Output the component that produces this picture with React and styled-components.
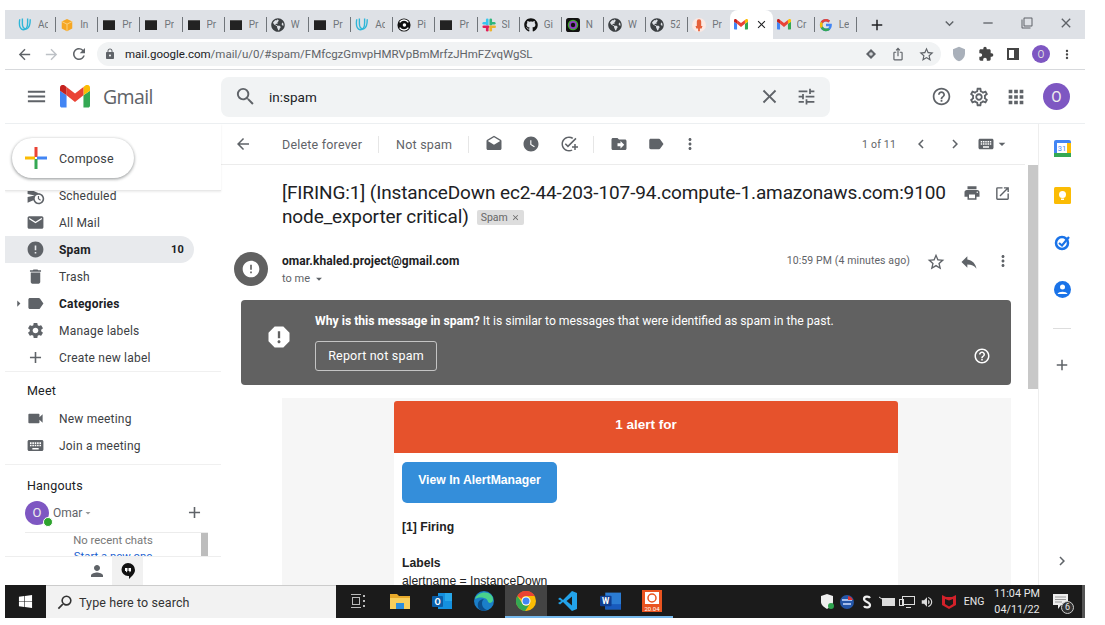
import React from "react";
import styled, { createGlobalStyle } from "styled-components";
import { FaGithub, FaGlobeAmericas, FaWindows } from "react-icons/fa";
import {
  MdAdd, MdAddTask, MdApps, MdArrowBack, MdArrowDropDown, MdArrowForward, MdArrowRight,
  MdChevronLeft, MdChevronRight, MdClose, MdDelete, MdDrafts, MdDriveFileMove, MdError,
  MdExtension, MdHelpOutline, MdIosShare, MdKeyboard, MdLabel, MdLock, MdMail, MdMenu,
  MdMoreVert, MdOpenInNew, MdOutlineSettings, MdPerson, MdPrint, MdRefresh, MdReply, MdReport,
  MdSearch, MdSettings, MdStarBorder, MdTune, MdVideocam, MdWatchLater, MdScheduleSend, MdVolumeUp,
  MdRemove, MdFilterNone, MdExpandMore, MdShield,
} from "react-icons/md";

const Global = createGlobalStyle`
  html, body { margin: 0; padding: 0; background: #fff; }
  * { box-sizing: border-box; }
  body { font-family: Roboto, "Liberation Sans", Arial, sans-serif; color: #202124; }
`;

const Page = styled.div`
  width: 1105px;
  height: 625px;
  padding: 10px 20px 7px 5px;
  overflow: hidden;
  display: flex;
  flex-direction: column;
`;

/* chrome */
const TabStrip = styled.div`
  height: 29px;
  background: #dee1e6;
  display: flex;
  align-items: center;
  padding-left: 9px;
  flex: none;
`;
const Tab = styled.div`
  width: 42.15px;
  height: ${(p) => (p.$active ? "29px" : "15px")};
  flex: none;
  display: flex;
  align-items: center;
  gap: 6px;
  padding-left: 4px;
  overflow: hidden;
  font-size: 10px;
  color: #70757a;
  white-space: nowrap;
  background: ${(p) => (p.$active ? "#fff" : "transparent")};
  border-radius: ${(p) => (p.$active ? "8px 8px 0 0" : "0")};
  border-right: ${(p) => (p.$active || p.$beforeActive ? "0" : "1px solid #70757a")};
`;
const TabGlyph = styled.span`
  width: 14px;
  height: 14px;
  flex: none;
  display: flex;
  align-items: center;
  justify-content: center;
  font-size: ${(p) => p.$size || 14}px;
  color: ${(p) => p.$color || "#3c4043"};
`;
const TabText = styled.span`
  width: 10px;
  overflow: hidden;
`;
const TerminalGlyph = styled.span`
  width: 12px;
  height: 10px;
  background: #222;
  border-top: 1px solid #555;
`;
const WindowButtons = styled.div`
  display: flex;
  align-items: center;
  margin-left: 11px;
`;
const NewTab = styled.span`
  width: 62px;
  font-size: 18px;
  display: flex;
  color: #202124;
`;
const WinButton = styled.span`
  width: 39px;
  display: flex;
  justify-content: center;
  padding-bottom: 3px;
  font-size: ${(p) => p.$size || 16}px;
  color: #5f6368;
`;

const Toolbar = styled.div`
  height: 31px;
  flex: none;
  display: flex;
  align-items: center;
  border-bottom: 1px solid #d7d9dc;
  padding-left: 6px;
`;
const NavSlot = styled.span`
  width: ${(p) => p.$w || 27}px;
  flex: none;
  display: flex;
  align-items: center;
  justify-content: center;
  font-size: ${(p) => p.$size || 17}px;
  color: ${(p) => p.$color || "#5f6368"};
  margin-left: ${(p) => p.$ml || 0}px;
`;
const Omnibox = styled.div`
  width: 844px;
  height: 24px;
  margin-left: 5px;
  border-radius: 12px;
  background: #f1f3f4;
  display: flex;
  align-items: center;
  padding: 0 1px 0 6px;
  flex: none;
`;
const Url = styled.div`
  flex: 1;
  font-size: 11.5px;
  color: #5f6368;
  margin-left: 8px;
  b { font-weight: 400; color: #202124; }
`;
const ChromeAvatar = styled.span`
  width: 18px;
  height: 18px;
  border-radius: 50%;
  background: #7e57c2;
  color: #ddd;
  font-size: 10px;
  display: flex;
  align-items: center;
  justify-content: center;
`;
const PanelGlyph = styled.span`
  width: 12px;
  height: 12px;
  border: 2px solid #444;
  border-right-width: 5px;
`;

/* gmail header */
const Header = styled.div`
  height: 54px;
  flex: none;
  display: flex;
  align-items: center;
  border-bottom: 1px solid #eceff1;
`;
const Brand = styled.div`
  width: 216px;
  flex: none;
  display: flex;
  align-items: center;
  padding-left: 19px;
  gap: 12px;
`;
const HeaderSlot = styled.span`
  width: ${(p) => p.$w || 37}px;
  flex: none;
  display: flex;
  justify-content: center;
  font-size: ${(p) => p.$size || 23}px;
  color: #5f6368;
`;
const Wordmark = styled.span`
  font-size: 19.5px;
  color: #5f6368;
  margin-left: 1px;
  font-family: "Open Sans", Roboto, sans-serif;
  letter-spacing: -0.6px;
`;
const SearchBox = styled.div`
  width: 609px;
  height: 40px;
  flex: none;
  background: #f1f3f4;
  border-radius: 8px;
  display: flex;
  align-items: center;
  padding: 0 5px 0 12px;
`;
const SearchText = styled.span`
  flex: 1;
  font-size: 13.5px;
  margin-left: 12px;
  color: #202124;
`;
const AccountAvatar = styled.span`
  width: 27px;
  height: 27px;
  border-radius: 50%;
  background: #7e57c2;
  color: #eee;
  font-size: 15px;
  display: flex;
  align-items: center;
  justify-content: center;
  margin-left: 9px;
`;
const HeaderRight = styled.div`
  display: flex;
  align-items: center;
  margin-left: 93px;
`;

const Main = styled.div`
  height: 461px;
  flex: none;
  display: flex;
  overflow: hidden;
`;

/* sidebar */
const Sidebar = styled.div`
  width: 216px;
  flex: none;
  display: flex;
  flex-direction: column;
  height: 100%;
`;
const ComposeArea = styled.div`
  height: 67px;
  flex: none;
  padding: 14px 0 0 7px;
  border-bottom: 1px solid #e8e8e8;
  box-shadow: 0 1px 2px rgba(0, 0, 0, 0.08);
  position: relative;
  z-index: 1;
  background: #fff;
`;
const ComposeButton = styled.div`
  width: 122px;
  height: 40px;
  border-radius: 20px;
  background: #fff;
  box-shadow: 0 1px 3px rgba(60, 64, 67, 0.4), 0 1px 3px 1px rgba(60, 64, 67, 0.15);
  display: flex;
  align-items: center;
  gap: 12px;
  padding-left: 13px;
  font-size: 12.5px;
  letter-spacing: 0.2px;
  color: #3c4043;
`;
const LabelClip = styled.div`
  height: 181px;
  flex: none;
  overflow: hidden;
  border-bottom: 1px solid #f0f0f0;
`;
const LabelList = styled.div`
  margin-top: -9px;
`;
const NavRow = styled.div`
  position: relative;
  width: 189px;
  height: 27px;
  display: flex;
  align-items: center;
  padding: 0 10px 0 20px;
  gap: 14px;
  font-size: 12px;
  letter-spacing: 0.2px;
  color: ${(p) => (p.$bold ? "#202124" : "#3c4043")};
  font-weight: ${(p) => (p.$bold ? 700 : 400)};
  background: ${(p) => (p.$active ? "#e8eaed" : "transparent")};
  border-radius: ${(p) => (p.$active ? "0 14px 14px 0" : "0")};
`;
const NavIcon = styled.span`
  width: 20px;
  flex: none;
  display: flex;
  justify-content: center;
  font-size: 19px;
  color: #5f6368;
`;
const Count = styled.span`
  margin-left: auto;
  font-size: 11px;
`;
const Caret = styled.span`
  position: absolute;
  left: 6px;
  top: 6px;
  font-size: 15px;
  display: flex;
  color: #5f6368;
`;
const SectionHead = styled.div`
  height: ${(p) => p.$h}px;
  flex: none;
  padding-left: 22px;
  display: flex;
  align-items: flex-end;
  font-size: 12.5px;
  letter-spacing: 0.2px;
  color: #202124;
  padding-bottom: ${(p) => p.$pb}px;
`;
const MeetBlock = styled.div`
  height: 93px;
  flex: none;
  border-bottom: 1px solid #f0f0f0;
`;
const HangoutsBlock = styled.div`
  flex: 1;
  min-height: 0;
  overflow: hidden;
  border-bottom: 1px solid #eee;
  display: flex;
  flex-direction: column;
`;
const OmarRow = styled.div`
  height: 37px;
  flex: none;
  display: flex;
  align-items: center;
  padding: 0 0 2px 20px;
  font-size: 12px;
  color: #5f6368;
`;
const OmarAvatar = styled.span`
  position: relative;
  width: 24px;
  height: 24px;
  border-radius: 50%;
  background: #7e57c2;
  color: #eee;
  font-size: 13px;
  display: flex;
  align-items: center;
  justify-content: center;
  margin-right: 4px;
`;
const Presence = styled.span`
  position: absolute;
  right: -4px;
  bottom: -2px;
  width: 10px;
  height: 10px;
  background: #2ea32e;
  border: 1px solid #fff;
  border-radius: 50%;
`;
const ChatBox = styled.div`
  margin-left: 20px;
  width: 183px;
  flex: 1;
  min-height: 0;
  border-top: 1px solid #ececec;
  display: flex;
  overflow: hidden;
`;
const ChatText = styled.div`
  flex: 1;
  text-align: center;
  font-size: 11.3px;
  line-height: 16px;
  color: #777;
  span { display: block; color: #1a5fd0; }
`;
const ChatThumb = styled.div`
  width: 7px;
  flex: none;
  background: #bdbdbd;
`;
const HangoutTabs = styled.div`
  height: 28px;
  flex: none;
  display: flex;
  padding-left: 76px;
`;
const HangoutTab = styled.span`
  width: 31px;
  display: flex;
  align-items: center;
  justify-content: center;
  font-size: 18px;
  color: ${(p) => (p.$active ? "#111" : "#5f6368")};
  background: ${(p) => (p.$active ? "#f1f1f1" : "transparent")};
`;

/* message column */
const Center = styled.div`
  width: 817px;
  flex: none;
  display: flex;
  flex-direction: column;
`;
const ActionBar = styled.div`
  width: 804px;
  height: 41px;
  flex: none;
  display: flex;
  align-items: center;
  padding-left: 10px;
  border-bottom: 1px solid #ececec;
  font-size: 12.5px;
  letter-spacing: 0.2px;
  color: #5f6368;
`;
const ActionIcon = styled.span`
  width: 24px;
  flex: none;
  display: flex;
  justify-content: center;
  font-size: ${(p) => p.$size || 18}px;
  color: ${(p) => p.$color || "#5f6368"};
  margin-left: ${(p) => p.$ml || 0}px;
`;
const ActionText = styled.span`
  margin-left: ${(p) => p.$ml || 0}px;
  white-space: nowrap;
`;
const Divider = styled.span`
  width: 1px;
  height: 17px;
  background: #e6e6e6;
  flex: none;
  margin-left: ${(p) => p.$ml}px;
`;
const Pager = styled.div`
  margin-left: auto;
  display: flex;
  align-items: center;
  font-size: 10.5px;
  padding-right: 15px;
  svg.caret { margin-left: -4px; }
`;
const MailRow = styled.div`
  flex: 1;
  min-height: 0;
  display: flex;
`;
const MailPane = styled.div`
  width: 807px;
  flex: none;
  overflow: hidden;
`;
const ScrollTrack = styled.div`
  width: 10px;
  flex: none;
`;
const ScrollThumb = styled.div`
  height: 224px;
  background: #c8c8c8;
`;
const SubjectRow = styled.div`
  display: flex;
  padding: 16px 0 0 61px;
`;
const Subject = styled.h2`
  margin: 0;
  width: 678px;
  flex: none;
  font-size: 19px;
  line-height: 24px;
  font-weight: 400;
  color: #202124;
  letter-spacing: -0.12px;
  white-space: nowrap;
`;
const Badge = styled.span`
  display: inline-flex;
  align-items: center;
  gap: 3px;
  height: 15px;
  margin-left: 8px;
  padding: 0 4px;
  border-radius: 2px;
  background: #ddd;
  font-size: 10.5px;
  letter-spacing: 0;
  color: #666;
  vertical-align: 2px;
  line-height: 15px;
`;
const SubjectActions = styled.div`
  display: flex;
  height: 24px;
  align-items: center;
  gap: 6px;
`;
const SenderRow = styled.div`
  display: flex;
  margin: 23px 0 0 13px;
  padding-right: 13px;
`;
const SenderAvatar = styled.span`
  width: 34px;
  height: 34px;
  border-radius: 50%;
  background: #616161;
  color: #fff;
  font-size: 20px;
  display: flex;
  align-items: center;
  justify-content: center;
  flex: none;
  margin-right: 14px;
`;
const SenderInfo = styled.div`
  flex: 1;
  padding-top: 1px;
`;
const SenderName = styled.div`
  font-size: 12px;
  line-height: 16px;
  font-weight: 700;
  letter-spacing: 0.07px;
`;
const ToMe = styled.div`
  margin-top: 2px;
  font-size: 11px;
  line-height: 16px;
  color: #5f6368;
  display: flex;
  align-items: center;
  svg { font-size: 14px; margin-left: 2px; }
`;
const SenderMeta = styled.div`
  display: flex;
  align-items: flex-start;
  font-size: 10.5px;
  letter-spacing: 0.1px;
  color: #5f6368;
  line-height: 18px;
`;
const MetaIcon = styled.span`
  width: 24px;
  margin-left: ${(p) => p.$ml}px;
  display: flex;
  justify-content: center;
  font-size: ${(p) => p.$size || 20}px;
`;
const Banner = styled.div`
  position: relative;
  margin: 13px 0 0 20px;
  width: 770px;
  height: 85px;
  border-radius: 4px;
  background: #616161;
  color: #fff;
  display: flex;
  padding: 13px 0 0 24px;
`;
const BannerIcon = styled.span`
  width: 28px;
  height: 28px;
  margin: 10px 22px 0 0;
  flex: none;
  font-size: 30px;
  display: flex;
  align-items: center;
  justify-content: center;
`;
const BannerText = styled.div`
  font-size: 12.2px;
  line-height: 16px;
  b { font-weight: 700; }
`;
const OutlineButton = styled.div`
  margin-top: 12px;
  width: 122px;
  height: 30px;
  border: 1px solid #c4c4c4;
  border-radius: 3px;
  display: flex;
  align-items: center;
  justify-content: center;
  font-size: 12.5px;
  letter-spacing: 0.2px;
`;
const BannerHelp = styled.span`
  position: absolute;
  right: 20px;
  bottom: 20px;
  font-size: 18px;
  display: flex;
`;
const BodyWrap = styled.div`
  margin: 13px 0 0 61px;
  width: 729px;
  height: 200px;
  padding: 3px 0 0 112px;
  background: #f6f6f6;
`;
const AlertCard = styled.div`
  width: 504px;
  height: 197px;
  background: #fff;
  border-radius: 3px 3px 0 0;
  font-family: "Liberation Sans", Arial, sans-serif;
`;
const AlertHead = styled.div`
  height: 52px;
  background: #e6522c;
  color: #fff;
  border-radius: 3px 3px 0 0;
  display: flex;
  align-items: center;
  justify-content: center;
  padding-bottom: 5px;
  font-size: 13.5px;
  font-weight: 700;
`;
const AlertBody = styled.div`
  padding: 9px 0 0 8px;
  font-size: 12.2px;
  color: #222;
`;
const AlertLink = styled.div`
  width: 155px;
  height: 41px;
  border-radius: 5px;
  background: #348eda;
  color: #fff;
  font-weight: 700;
  display: flex;
  align-items: center;
  justify-content: center;
  padding-bottom: 5px;
`;
const AlertLine = styled.div`
  margin-top: ${(p) => p.$mt}px;
  line-height: 16px;
  font-weight: ${(p) => (p.$bold ? 700 : 400)};
`;

/* add-on rail */
const Rail = styled.div`
  width: 47px;
  flex: none;
  border-left: 1px solid #eee;
  display: flex;
  flex-direction: column;
  align-items: center;
  padding-top: 14px;
`;
const RailIcon = styled.span`
  width: 20px;
  height: 20px;
  margin-bottom: 27px;
  display: flex;
  align-items: center;
  justify-content: center;
`;
const RailRule = styled.span`
  width: 18px;
  height: 1px;
  background: #ddd;
  margin: 2px 0 27px;
`;
const RailPlus = styled.span`
  font-size: 18px;
  display: flex;
  color: #5f6368;
`;
const RailChevron = styled.span`
  margin-top: auto;
  margin-bottom: 15px;
  font-size: 18px;
  display: flex;
  color: #5f6368;
`;

/* windows taskbar */
const Taskbar = styled.div`
  height: 33px;
  flex: none;
  display: flex;
  align-items: stretch;
  background: #1b1b1b;
  color: #e8e8e8;
  border-right: 3px solid #555;
`;
const StartButton = styled.span`
  width: 41px;
  flex: none;
  display: flex;
  align-items: center;
  justify-content: center;
  font-size: 15px;
  color: #fff;
`;
const TaskSearch = styled.div`
  width: 290px;
  flex: none;
  background: #f2f2f2;
  border-top: 1px solid #ccc;
  display: flex;
  align-items: center;
  padding-left: 9px;
  gap: 5px;
  color: #333;
  font-size: 12.5px;
  letter-spacing: 0.1px;
`;
const TaskApp = styled.span`
  width: ${(p) => p.$w || 42}px;
  flex: none;
  display: flex;
  align-items: center;
  justify-content: center;
  background: ${(p) => (p.$active ? "#444" : "transparent")};
  border-bottom: 2px solid ${(p) => (p.$open ? "#76b9ed" : "transparent")};
  font-size: 17px;
`;
const Tray = styled.div`
  margin-left: auto;
  display: flex;
  align-items: center;
  padding-right: 5px;
`;
const TraySlot = styled.span`
  width: ${(p) => p.$w || 20}px;
  display: flex;
  align-items: center;
  justify-content: center;
  font-size: 14px;
`;
const TrayLang = styled.span`
  width: 26px;
  text-align: center;
  font-size: 10.5px;
`;
const Clock = styled.div`
  width: 52px;
  text-align: center;
  font-size: 10.8px;
  line-height: 16px;
  margin-left: 4px;
`;
const Notify = styled.span`
  position: relative;
  width: 34px;
  display: flex;
  justify-content: center;
`;
const NotifyBadge = styled.span`
  position: absolute;
  right: 3px;
  bottom: -4px;
  width: 13px;
  height: 13px;
  border-radius: 50%;
  background: #333;
  border: 1px solid #ccc;
  font-size: 9px;
  line-height: 11px;
  text-align: center;
`;

const GmailLogo = ({ w = 30 }) => (
  <svg width={w} height={w * 0.75} viewBox="0 0 32 24">
    <path d="M2 24h5V11L0 6v16c0 1 1 2 2 2z" fill="#4285f4" />
    <path d="M25 24h5c1 0 2-1 2-2V6l-7 5z" fill="#34a853" />
    <path d="M25 2v9l7-5V3c0-3-3-4-5-2.500z" fill="#fbbc04" />
    <path d="M7 11V2l9 7 9-7v9l-9 7z" fill="#ea4335" />
    <path d="M0 3v3l7 5V2L5 .5C3-1 0 0 0 3z" fill="#c5221f" />
  </svg>
);

const Udacity = () => (
  <svg width="15" height="15" viewBox="0 0 16 16" fill="none" stroke="#2fb6d8" strokeWidth="1.6">
    <path d="M2 2c-1 6 0 11 4 12 4 0 5-4 5-8V1" />
    <path d="M5 1v6c0 4 2 6 5 6 3-1 4-6 4-11" />
  </svg>
);
const OrangeBox = () => (
  <svg width="14" height="14" viewBox="0 0 16 16">
    <path d="M8 1l6 3v8l-6 3-6-3V4z" fill="#f5a623" />
    <path d="M8 7v8M2 4l6 3 6-3" stroke="#fcd68a" fill="none" />
  </svg>
);
const CircleCi = () => (
  <svg width="14" height="14" viewBox="0 0 16 16">
    <circle cx="8" cy="8" r="7.500" fill="#111" />
    <circle cx="8.500" cy="8" r="2" fill="#fff" />
    <path d="M3 5a6 6 0 0 1 10 0M3 11a6 6 0 0 0 10 0" stroke="#fff" strokeWidth="1.500" fill="none" />
  </svg>
);
const Slack = () => (
  <svg width="14" height="14" viewBox="0 0 16 16" strokeWidth="3" strokeLinecap="round">
    <path d="M6 2v5" stroke="#36c5f0" />
    <path d="M10 2v5" stroke="#2eb67d" />
    <path d="M2 10h5" stroke="#e01e5a" />
    <path d="M9.500 10h5" stroke="#ecb22e" />
    <path d="M2 6h3" stroke="#36c5f0" />
    <path d="M12 6h2" stroke="#2eb67d" />
    <path d="M6 12v2" stroke="#e01e5a" />
    <path d="M10 12v2" stroke="#ecb22e" />
  </svg>
);
const Nagios = () => (
  <svg width="14" height="14" viewBox="0 0 16 16">
    <rect width="16" height="16" rx="3" fill="#111" />
    <circle cx="8" cy="8" r="6" fill="#3fae2a" />
    <circle cx="8" cy="8" r="4.500" fill="#8e3fc4" />
    <circle cx="8" cy="8" r="2.500" fill="#111" />
  </svg>
);
const Mic = () => (
  <svg width="14" height="14" viewBox="0 0 16 16">
    <circle cx="8" cy="8" r="8" fill="#fbe9e4" />
    <path d="M5.500 4a2.500 2.500 0 0 1 5 0v5h-5zM4 9h8l-1 3H5zM7 12h2v3H7z" fill="#e5603a" />
  </svg>
);
const GoogleG = () => (
  <svg width="14" height="14" viewBox="0 0 48 48">
    <path d="M44 20H24v8h11.500C34 33 30 36 24 36c-7 0-12-5-12-12s5-12 12-12c3 0 6 1 8 3l6-6C34 5 29 3 24 3 12 3 3 12 3 24s9 21 21 21c11 0 20-8 20-21 0-1 0-3 0-4z" fill="#4285f4" />
    <path d="M6 13l7 5c2-4 6-6 11-6 3 0 6 1 8 3l6-6C34 5 29 3 24 3 16 3 9 7 6 13z" fill="#ea4335" />
    <path d="M24 45c5 0 10-2 14-5l-7-5c-2 1-4 1-7 1-5 0-10-3-11-8l-7 5c3 7 10 12 18 12z" fill="#34a853" />
    <path d="M6 13c-2 3-3 7-3 11s1 8 3 11l7-7c-1-3-1-5 0-10z" fill="#fbbc04" />
  </svg>
);
const LensEye = () => (
  <svg width="12" height="12" viewBox="0 0 12 12">
    <path d="M6 1l5 5-5 5-5-5z" fill="#5f6368" />
    <circle cx="6" cy="6" r="1.800" fill="#d5d7da" />
  </svg>
);
const ComposePlus = () => (
  <svg width="22" height="22" viewBox="0 0 22 22">
    <rect x="9.500" y="0" width="3" height="10" fill="#ea4335" />
    <rect x="12" y="9.500" width="10" height="3" fill="#4285f4" />
    <rect x="9.500" y="12" width="3" height="10" fill="#34a853" />
    <rect x="0" y="9.500" width="10" height="3" fill="#fbbc04" />
  </svg>
);
const Calendar = () => (
  <svg width="17" height="17" viewBox="0 0 17 17">
    <rect width="17" height="17" rx="2" fill="#4285f4" />
    <rect x="13" y="3" width="4" height="11" fill="#fbbc04" />
    <rect y="13" width="17" height="4" fill="#34a853" />
    <rect x="3" y="3" width="10" height="10" fill="#fff" />
    <text x="8" y="11" fontSize="7.500" textAnchor="middle" fill="#4285f4">31</text>
  </svg>
);
const Keep = () => (
  <svg width="17" height="17" viewBox="0 0 17 17">
    <rect width="17" height="17" rx="1.500" fill="#fbbc04" />
    <circle cx="8.500" cy="7.500" r="3.500" fill="#fff" />
    <rect x="7" y="11.500" width="3" height="1.500" fill="#fff" />
  </svg>
);
const Tasks = () => (
  <svg width="17" height="17" viewBox="0 0 17 17" fill="none">
    <circle cx="8" cy="9" r="6" stroke="#1a73e8" strokeWidth="2.500" />
    <path d="M5 9l3 2.500L15 3" stroke="#1a73e8" strokeWidth="2.200" />
  </svg>
);
const Contact = () => (
  <svg width="17" height="17" viewBox="0 0 17 17">
    <circle cx="8.500" cy="8.500" r="8.500" fill="#1a73e8" />
    <circle cx="8.500" cy="6" r="2.500" fill="#fff" />
    <path d="M3.500 13c1-3 9-3 10 0z" fill="#fff" />
  </svg>
);
const HangoutBubble = () => (
  <svg width="14" height="16" viewBox="0 0 14 16">
    <path d="M7 0a7 7 0 0 1 7 7c0 4-4 7-6 9v-3H7A6.500 6.500 0 0 1 7 0z" fill="#111" />
    <path d="M4 5h2.500v3L5 9.500V8H4zM7.500 5H10v3L8.500 9.500V8h-1z" fill="#fff" />
  </svg>
);
const TaskView = () => (
  <svg width="16" height="14" viewBox="0 0 16 14" fill="none" stroke="#bbb">
    <path d="M1 .5h10M1 13.500h10" />
    <rect x="2.500" y="3.500" width="7" height="7" />
    <path d="M14 1v2M14 6v2M14 11v2" strokeWidth="2" />
  </svg>
);
const Explorer = () => (
  <svg width="20" height="17" viewBox="0 0 20 17">
    <path d="M0 2h7l2 2h11v4H0z" fill="#e8a92a" />
    <rect y="6" width="20" height="11" fill="#f9cf5b" />
    <rect x="6" y="11" width="8" height="6" fill="#2d8fdd" />
  </svg>
);
const Outlook = () => (
  <svg width="20" height="18" viewBox="0 0 20 18">
    <rect x="6" y="1" width="14" height="16" fill="#1490df" />
    <rect x="13" y="1" width="7" height="8" fill="#28a8ea" />
    <rect y="4" width="11" height="11" rx="1" fill="#0a5ea8" />
    <text x="5.500" y="13" fontSize="9" textAnchor="middle" fill="#fff" fontWeight="700">O</text>
  </svg>
);
const Edge = () => (
  <svg width="20" height="20" viewBox="0 0 20 20">
    <circle cx="10" cy="10" r="10" fill="#1b7fc9" />
    <path d="M1 8C3 1 14-1 18 5c2 3 1 7-2 7-3 0-1-4-6-5C6 6 3 7 1 8z" fill="#49d18c" />
    <path d="M10 20c-5 0-7-4-6-8 1-3 4-4 6-4-3 2-3 9 3 11z" fill="#0c4f8c" />
  </svg>
);
const Chrome = () => (
  <svg width="20" height="20" viewBox="0 0 20 20">
    <circle cx="10" cy="10" r="10" fill="#fbbc04" />
    <path d="M1.300 5A10 10 0 0 1 18.700 5H10a5 5 0 0 0-4.500 3z" fill="#ea4335" />
    <path d="M1.300 5A10 10 0 0 0 9 20l4.500-6.500A5 5 0 0 1 5.500 11z" fill="#34a853" />
    <circle cx="10" cy="10" r="4.500" fill="#fff" />
    <circle cx="10" cy="10" r="3.500" fill="#4285f4" />
  </svg>
);
const VsCode = () => (
  <svg width="20" height="20" viewBox="0 0 20 20">
    <path d="M14 0l5 2v16l-5 2L5 11l-3 2.500L0 12l3.500-2L0 8l2-1.500L5 9z" fill="#23a3ea" />
    <path d="M14 5.500L8.500 10l5.500 4.500z" fill="#1b1b1b" />
  </svg>
);
const Word = () => (
  <svg width="21" height="20" viewBox="0 0 20 18">
    <rect x="5" y="1" width="15" height="16" fill="#2b7cd3" />
    <rect x="5" y="12" width="15" height="5" fill="#185abd" />
    <rect y="4" width="11" height="10" rx="1" fill="#103f91" />
    <text x="5.500" y="12" fontSize="8" textAnchor="middle" fill="#fff" fontWeight="700">W</text>
  </svg>
);
const Ubuntu = () => (
  <svg width="20" height="22" viewBox="0 0 20 22">
    <rect width="20" height="22" fill="#e95420" />
    <rect x="3" y="2" width="14" height="12" fill="#fff" />
    <circle cx="10" cy="8" r="4" fill="none" stroke="#e95420" strokeWidth="1.500" />
    <text x="10" y="20.500" fontSize="6" textAnchor="middle" fill="#fff">20.04</text>
  </svg>
);
const TrayShield = () => (
  <svg width="14" height="15" viewBox="0 0 14 15">
    <path d="M7 0l6 2v6c0 3-3 5-6 7-3-2-6-4-6-7V2z" fill="#eee" />
    <circle cx="11" cy="12" r="3" fill="#2ea44f" />
  </svg>
);
const TrayBall = () => (
  <svg width="14" height="14" viewBox="0 0 14 14">
    <circle cx="7" cy="7" r="7" fill="#2456a8" />
    <path d="M2 5h10M3 9h8" stroke="#cfe0ff" strokeWidth="1.500" />
    <path d="M8 1a7 7 0 0 1 5 4H8z" fill="#d33" />
  </svg>
);
const TrayS = () => (
  <svg width="10" height="14" viewBox="0 0 10 14" fill="none" stroke="#eee" strokeWidth="2.200">
    <path d="M8 3C7 1 2 1 2 4s6 3 6 6-5 3-6 1" />
  </svg>
);
const TrayBattery = () => (
  <svg width="16" height="11" viewBox="0 0 16 11">
    <rect x="3" y="2" width="13" height="8" fill="#ddd" />
    <path d="M0 1l3 2" stroke="#ddd" />
  </svg>
);
const TrayNet = () => (
  <svg width="16" height="14" viewBox="0 0 16 14" fill="none" stroke="#ddd">
    <rect x="3.500" y="1.500" width="12" height="8" />
    <rect x=".5" y="4.500" width="4" height="6" />
    <path d="M7 12.500h5" />
  </svg>
);
const McAfee = () => (
  <svg width="14" height="15" viewBox="0 0 14 15">
    <path d="M0 1l4 2h6l4-2v10l-7 4-7-4z" fill="#d3212a" />
    <path d="M3 5l4 1.500L11 5v5l-4 2.500L3 10z" fill="#1b1b1b" />
  </svg>
);
const NoteBubble = () => (
  <svg width="17" height="17" viewBox="0 0 17 17">
    <path d="M1 1h15v11H9l-3 4v-4H1z" fill="#eee" />
    <path d="M3 4h11M3 6.500h11M3 9h7" stroke="#999" />
  </svg>
);

const tabs = [
  [<Udacity />, "Ac"], [<OrangeBox />, "In"], [<TerminalGlyph />, "Pr"], [<TerminalGlyph />, "Pr"],
  [<TerminalGlyph />, "Pr"], [<TerminalGlyph />, "Pr"], [<FaGlobeAmericas />, "W"], [<TerminalGlyph />, "Pr"],
  [<Udacity />, "Ac"], [<CircleCi />, "Pi"], [<TerminalGlyph />, "Pr"], [<Slack />, "Sl"],
  [<FaGithub color="#111" />, "Gi"], [<Nagios />, "N"], [<FaGlobeAmericas />, "W"], [<FaGlobeAmericas />, "52"],
  [<Mic />, "Pr"],
];

export default function App() {
  return (
    <>
      <Global />
      <Page>
        <TabStrip>
          {tabs.map(([icon, label], i) => (
            <Tab key={i} $beforeActive={i === 16}>
              <TabGlyph>{icon}</TabGlyph>
              <TabText>{label}</TabText>
            </Tab>
          ))}
          <Tab $active>
            <TabGlyph><GmailLogo w={14} /></TabGlyph>
            <TabGlyph $color="#202124" $size={13}><MdClose /></TabGlyph>
          </Tab>
          <Tab>
            <TabGlyph><GmailLogo w={14} /></TabGlyph>
            <TabText>Cr</TabText>
          </Tab>
          <Tab>
            <TabGlyph><GoogleG /></TabGlyph>
            <TabText>Le</TabText>
          </Tab>
          <WindowButtons>
            <NewTab><MdAdd /></NewTab>
            <WinButton $size={17}><MdExpandMore /></WinButton>
            <WinButton><MdRemove /></WinButton>
            <WinButton $size={12}><MdFilterNone /></WinButton>
            <WinButton><MdClose /></WinButton>
          </WindowButtons>
        </TabStrip>

        <Toolbar>
          <NavSlot><MdArrowBack /></NavSlot>
          <NavSlot $color="#bdc1c6"><MdArrowForward /></NavSlot>
          <NavSlot $size={18}><MdRefresh /></NavSlot>
          <Omnibox>
            <NavSlot $w={14} $size={12}><MdLock /></NavSlot>
            <Url><b>mail.google.com</b>/mail/u/0/#spam/FMfcgzGmvpHMRVpBmMrfzJHmFZvqWgSL</Url>
            <NavSlot $w={22}><LensEye /></NavSlot>
            <NavSlot $w={31} $size={14}><MdIosShare /></NavSlot>
            <NavSlot $w={27} $size={17}><MdStarBorder /></NavSlot>
          </Omnibox>
          <NavSlot $w={18} $size={16} $color="#a9b0ba" $ml={9}><MdShield /></NavSlot>
          <NavSlot $w={36} $size={16} $color="#444"><MdExtension /></NavSlot>
          <NavSlot $w={18}><PanelGlyph /></NavSlot>
          <NavSlot $w={38}><ChromeAvatar>O</ChromeAvatar></NavSlot>
          <NavSlot $w={14} $color="#444"><MdMoreVert /></NavSlot>
        </Toolbar>

        <Header>
          <Brand>
            <HeaderSlot $w={24}><MdMenu /></HeaderSlot>
            <GmailLogo />
            <Wordmark>Gmail</Wordmark>
          </Brand>
          <SearchBox>
            <HeaderSlot $w={24}><MdSearch /></HeaderSlot>
            <SearchText>in:spam</SearchText>
            <HeaderSlot $w={37}><MdClose /></HeaderSlot>
            <HeaderSlot $w={37} $size={21}><MdTune /></HeaderSlot>
          </SearchBox>
          <HeaderRight>
            <HeaderSlot $size={21}><MdHelpOutline /></HeaderSlot>
            <HeaderSlot $size={22}><MdOutlineSettings /></HeaderSlot>
            <HeaderSlot $size={22}><MdApps /></HeaderSlot>
            <AccountAvatar>O</AccountAvatar>
          </HeaderRight>
        </Header>

        <Main>
          <Sidebar>
            <ComposeArea>
              <ComposeButton><ComposePlus />Compose</ComposeButton>
            </ComposeArea>
            <LabelClip>
              <LabelList>
                <NavRow><NavIcon><MdScheduleSend /></NavIcon>Scheduled</NavRow>
                <NavRow><NavIcon><MdMail /></NavIcon>All Mail</NavRow>
                <NavRow $active $bold><NavIcon><MdError /></NavIcon>Spam<Count>10</Count></NavRow>
                <NavRow><NavIcon><MdDelete /></NavIcon>Trash</NavRow>
                <NavRow $bold>
                  <Caret><MdArrowRight /></Caret>
                  <NavIcon><MdLabel /></NavIcon>Categories
                </NavRow>
                <NavRow><NavIcon><MdSettings /></NavIcon>Manage labels</NavRow>
                <NavRow><NavIcon><MdAdd /></NavIcon>Create new label</NavRow>
              </LabelList>
            </LabelClip>
            <MeetBlock>
              <SectionHead $h={33} $pb={7}>Meet</SectionHead>
              <NavRow><NavIcon><MdVideocam /></NavIcon>New meeting</NavRow>
              <NavRow><NavIcon><MdKeyboard /></NavIcon>Join a meeting</NavRow>
            </MeetBlock>
            <HangoutsBlock>
              <SectionHead $h={30} $pb={2}>Hangouts</SectionHead>
              <OmarRow>
                <OmarAvatar>O<Presence /></OmarAvatar>
                Omar
                <MdArrowDropDown color="#999" />
                <NavSlot $w={24} $size={19} $ml={88}><MdAdd /></NavSlot>
              </OmarRow>
              <ChatBox>
                <ChatText>No recent chats<span>Start a new one</span></ChatText>
                <ChatThumb />
              </ChatBox>
            </HangoutsBlock>
            <HangoutTabs>
              <HangoutTab><MdPerson /></HangoutTab>
              <HangoutTab $active><HangoutBubble /></HangoutTab>
            </HangoutTabs>
          </Sidebar>

          <Center>
            <ActionBar>
              <ActionIcon><MdArrowBack /></ActionIcon>
              <ActionText $ml={27}>Delete forever</ActionText>
              <Divider $ml={16} />
              <ActionText $ml={17}>Not spam</ActionText>
              <Divider $ml={16} />
              <ActionIcon $ml={13}><MdDrafts /></ActionIcon>
              <ActionIcon $ml={13}><MdWatchLater /></ActionIcon>
              <ActionIcon $ml={14}><MdAddTask /></ActionIcon>
              <Divider $ml={12} />
              <ActionIcon $ml={13}><MdDriveFileMove /></ActionIcon>
              <ActionIcon $ml={13}><MdLabel /></ActionIcon>
              <ActionIcon $ml={10}><MdMoreVert /></ActionIcon>
              <Pager>
                <span>1 of 11</span>
                <ActionIcon $ml={13}><MdChevronLeft /></ActionIcon>
                <ActionIcon $ml={10}><MdChevronRight /></ActionIcon>
                <ActionIcon $ml={7} $size={18}><MdKeyboard /></ActionIcon>
                <MdArrowDropDown className="caret" size={16} />
              </Pager>
            </ActionBar>
            <MailRow>
              <MailPane>
                <SubjectRow>
                  <Subject>
                    [FIRING:1] (InstanceDown ec2-44-203-107-94.compute-1.amazonaws.com:9100
                    <br />
                    node_exporter critical)
                    <Badge>Spam <MdClose size={9} /></Badge>
                  </Subject>
                  <SubjectActions>
                    <ActionIcon><MdPrint /></ActionIcon>
                    <ActionIcon $size={17}><MdOpenInNew /></ActionIcon>
                  </SubjectActions>
                </SubjectRow>
                <SenderRow>
                  <SenderAvatar><MdError /></SenderAvatar>
                  <SenderInfo>
                    <SenderName>omar.khaled.project@gmail.com</SenderName>
                    <ToMe>to me <MdArrowDropDown /></ToMe>
                  </SenderInfo>
                  <SenderMeta>
                    10:59 PM (4 minutes ago)
                    <MetaIcon $ml={14}><MdStarBorder /></MetaIcon>
                    <MetaIcon $ml={9}><MdReply /></MetaIcon>
                    <MetaIcon $ml={10} $size={18}><MdMoreVert /></MetaIcon>
                  </SenderMeta>
                </SenderRow>
                <Banner>
                  <BannerIcon><MdReport /></BannerIcon>
                  <BannerText>
                    <b>Why is this message in spam?</b> It is similar to messages that were identified as spam in the past.
                    <OutlineButton>Report not spam</OutlineButton>
                  </BannerText>
                  <BannerHelp><MdHelpOutline /></BannerHelp>
                </Banner>
                <BodyWrap>
                  <AlertCard>
                    <AlertHead>1 alert for</AlertHead>
                    <AlertBody>
                      <AlertLink>View In AlertManager</AlertLink>
                      <AlertLine $mt={16} $bold>[1] Firing</AlertLine>
                      <AlertLine $mt={20} $bold>Labels</AlertLine>
                      <AlertLine $mt={2}>alertname = InstanceDown</AlertLine>
                    </AlertBody>
                  </AlertCard>
                </BodyWrap>
              </MailPane>
              <ScrollTrack><ScrollThumb /></ScrollTrack>
            </MailRow>
          </Center>

          <Rail>
            <RailIcon><Calendar /></RailIcon>
            <RailIcon><Keep /></RailIcon>
            <RailIcon><Tasks /></RailIcon>
            <RailIcon><Contact /></RailIcon>
            <RailRule />
            <RailPlus><MdAdd /></RailPlus>
            <RailChevron><MdChevronRight /></RailChevron>
          </Rail>
        </Main>

        <Taskbar>
          <StartButton><FaWindows /></StartButton>
          <TaskSearch><MdSearch size={19} style={{ transform: "scaleX(-1)" }} />Type here to search</TaskSearch>
          <TaskApp $w={43}><TaskView /></TaskApp>
          <TaskApp><Explorer /></TaskApp>
          <TaskApp><Outlook /></TaskApp>
          <TaskApp><Edge /></TaskApp>
          <TaskApp $active $open><Chrome /></TaskApp>
          <TaskApp $open><VsCode /></TaskApp>
          <TaskApp $open><Word /></TaskApp>
          <TaskApp $open><Ubuntu /></TaskApp>
          <Tray>
            <TraySlot><TrayShield /></TraySlot>
            <TraySlot><TrayBall /></TraySlot>
            <TraySlot><TrayS /></TraySlot>
            <TraySlot><TrayBattery /></TraySlot>
            <TraySlot><TrayNet /></TraySlot>
            <TraySlot><MdVolumeUp color="#ddd" /></TraySlot>
            <TraySlot $w={24}><McAfee /></TraySlot>
            <TrayLang>ENG</TrayLang>
            <Clock>11:04 PM<br />04/11/22</Clock>
            <Notify><NoteBubble /><NotifyBadge>6</NotifyBadge></Notify>
          </Tray>
        </Taskbar>
      </Page>
    </>
  );
}
